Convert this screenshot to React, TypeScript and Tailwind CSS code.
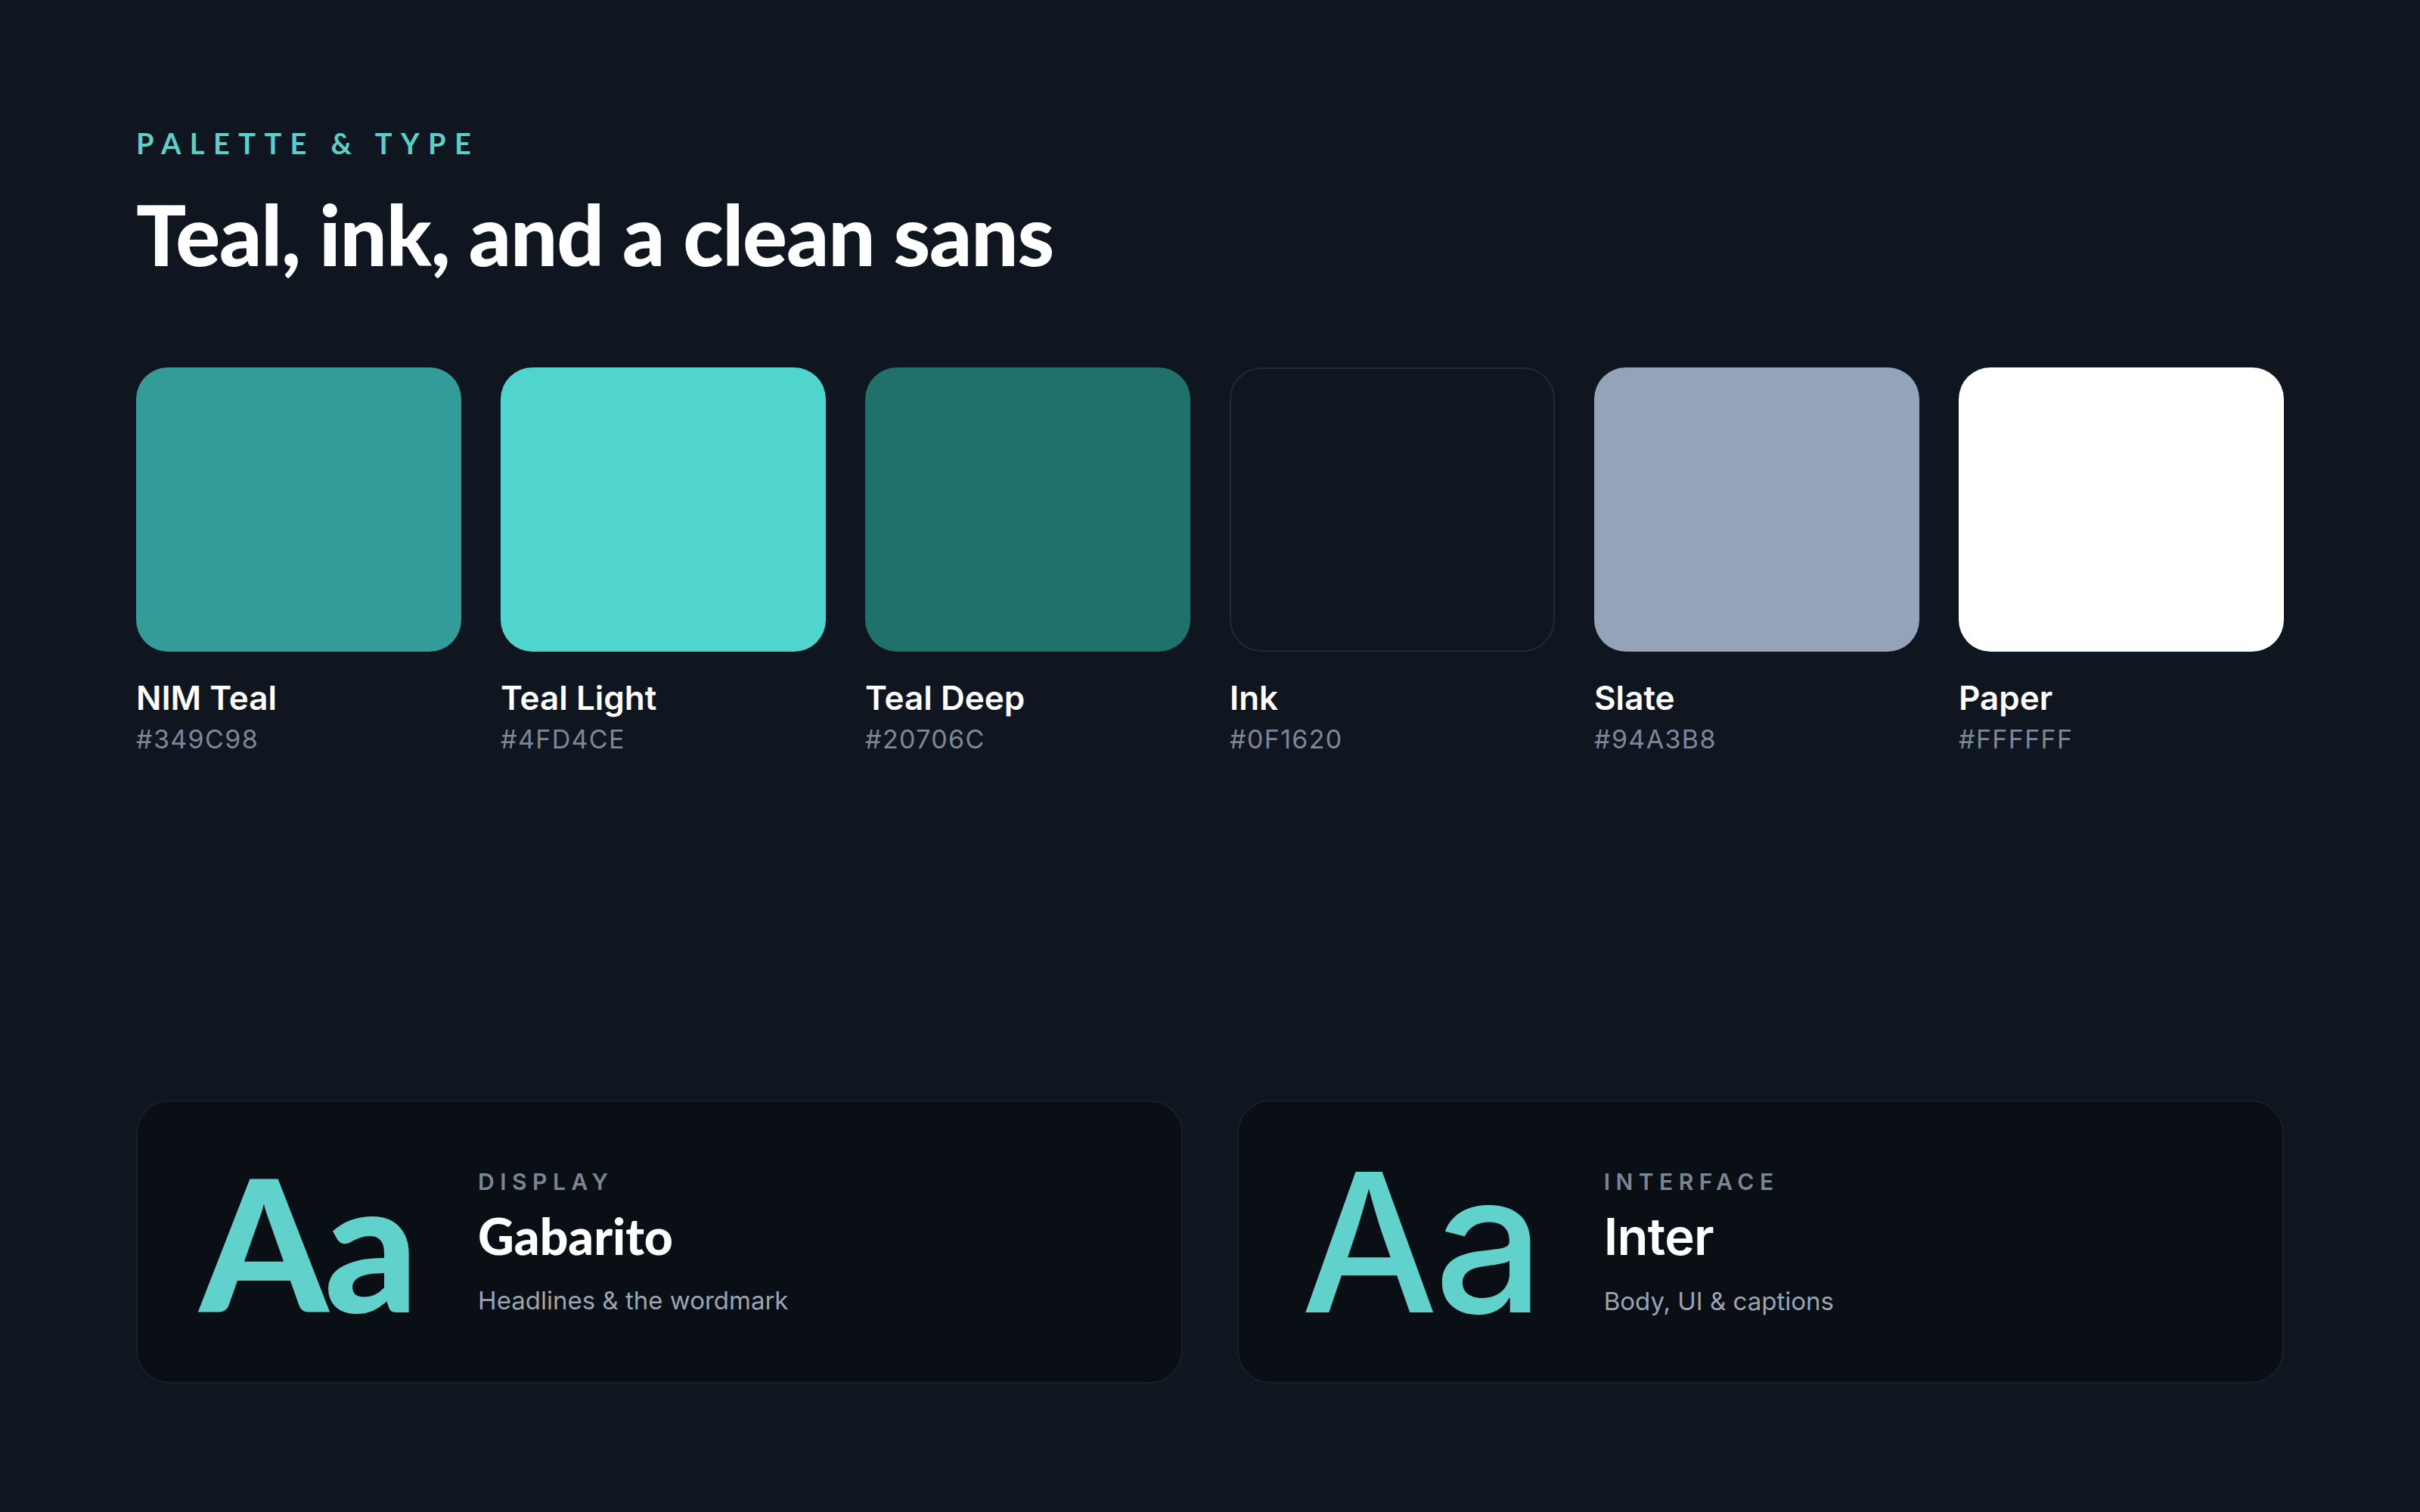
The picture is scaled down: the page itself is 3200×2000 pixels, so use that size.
const swatches = [
  { name: "NIM Teal", hex: "#349C98", cls: "bg-[#349c98]" },
  { name: "Teal Light", hex: "#4FD4CE", cls: "bg-[#4fd4ce]" },
  { name: "Teal Deep", hex: "#20706C", cls: "bg-[#20706c]" },
  { name: "Ink", hex: "#0F1620", cls: "bg-[#0f1620] border-2 border-[#222a35]" },
  { name: "Slate", hex: "#94A3B8", cls: "bg-[#94a3b8]" },
  { name: "Paper", hex: "#FFFFFF", cls: "bg-white" },
];

const display = "font-['Lato','Inter',sans-serif]";
const body = "font-['Inter','Liberation_Sans',sans-serif]";

function TypeCard({
  label,
  title,
  caption,
  sample,
  titleCls,
}: {
  label: string;
  title: string;
  caption: string;
  sample: string;
  titleCls: string;
}) {
  return (
    <div className="flex h-[375px] items-center gap-[84px] rounded-[44px] border-2 border-[#1a2029] bg-[#0a0e15] pl-[82px]">
      <div className={`leading-none text-[#60d2cb] ${sample}`}>Aa</div>
      <div className="flex flex-col">
        <div className={`${body} text-[30px] font-semibold uppercase leading-none tracking-[0.25em] text-[#7b8692]`}>
          {label}
        </div>
        <div className={`mt-[24px] leading-none text-white ${titleCls}`}>{title}</div>
        <div className={`${body} mt-[36px] text-[33px] leading-none text-[#9aa5b2]`}>{caption}</div>
      </div>
    </div>
  );
}

export default function App() {
  return (
    <div className="h-[2000px] w-[3200px] bg-[#0f1620] px-[180px] pt-[170px]">
      {/* Heading */}
      <div className={`${display} text-[38px] font-bold uppercase leading-none tracking-[0.3em] text-[#5ccfc8]`}>
        Palette &amp; Type
      </div>
      <h1 className={`${display} mt-[46px] text-[110px] font-black leading-none tracking-[-0.01em] text-white`}>
        Teal, ink, and a clean sans
      </h1>

      {/* Swatches */}
      <div className="mt-[122px] grid grid-cols-6 gap-[52px]">
        {swatches.map((s) => (
          <div key={s.name}>
            <div className={`h-[376px] rounded-[42px] ${s.cls}`} />
            <div className={`${body} mt-[39px] text-[44px] font-semibold leading-none text-white`}>{s.name}</div>
            <div className={`${body} mt-[16px] text-[34px] leading-none tracking-[0.04em] text-[#7c8896]`}>{s.hex}</div>
          </div>
        ))}
      </div>

      {/* Type cards */}
      <div className="mt-[460px] grid grid-cols-2 gap-[72px]">
        <TypeCard
          label="Display"
          title="Gabarito"
          caption="Headlines & the wordmark"
          sample={`${display} text-[242px] font-black tracking-[-0.02em]`}
          titleCls={`${display} text-[66px] font-black`}
        />
        <TypeCard
          label="Interface"
          title="Inter"
          caption="Body, UI & captions"
          sample={`${body} text-[256px] font-medium tracking-[-0.02em]`}
          titleCls={`${body} text-[67px] font-semibold tracking-[-0.01em]`}
        />
      </div>
    </div>
  );
}
